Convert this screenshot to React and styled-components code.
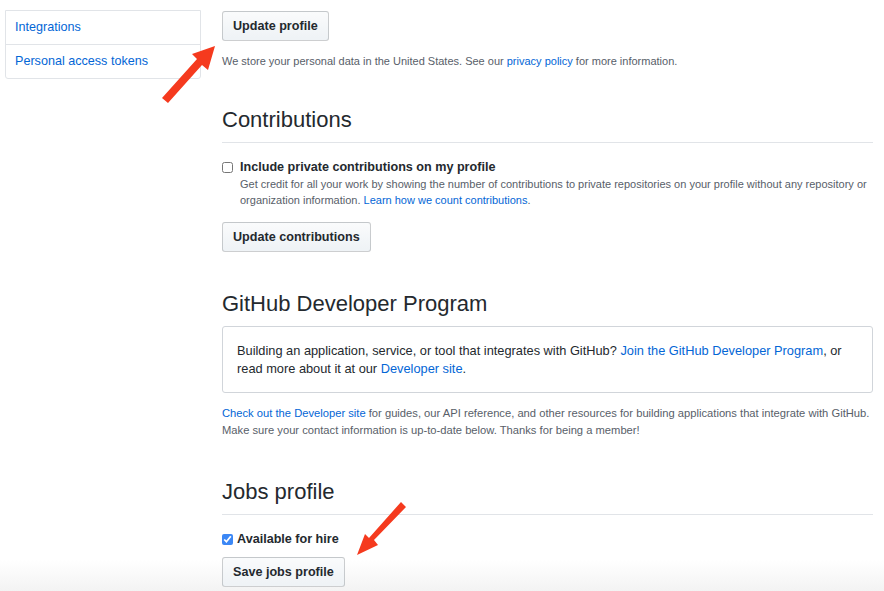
import React from 'react';
import styled, { createGlobalStyle } from 'styled-components';

const GlobalStyle = createGlobalStyle`
  html {
    min-height: 100%;
    background: linear-gradient(to bottom, #fff 0, #fff 560px, #f3f3f3 591px);
  }
  body {
    margin: 0;
    font-family: "Liberation Sans", Arial, Helvetica, sans-serif;
    color: #24292e;
    background: transparent;
  }
`;

const Page = styled.div`
  position: relative;
  display: flex;
  align-items: flex-start;
  gap: 21px;
  padding-left: 5px;
  width: 884px;
  height: 591px;
  overflow: hidden;
  box-sizing: border-box;
`;

const Sidebar = styled.nav`
  width: 196px;
  margin-top: 10px;
  border: 1px solid #e1e4e8;
  border-radius: 0 0 3px 3px;
  box-sizing: border-box;
`;

const SideItem = styled.a`
  display: block;
  height: 33px;
  line-height: 33px;
  padding-left: 9px;
  font-size: 12.6px;
  color: #0366d6;
  text-decoration: none;
  border-top: ${(p) => (p.first ? 'none' : '1px solid #e1e4e8')};
`;

const Main = styled.main`
  width: 651px;
  padding-top: 11px;
`;

const Button = styled.button`
  display: block;
  height: 30px;
  padding: 0 10px;
  margin-top: ${(p) => p.mt || 0}px;
  font-family: inherit;
  font-size: 12.6px;
  font-weight: bold;
  color: #24292e;
  background: linear-gradient(to bottom, #fafbfc, #eff3f6 90%);
  border: 1px solid rgba(27, 31, 35, 0.2);
  border-radius: 3px;
  cursor: pointer;
`;

const Note = styled.p`
  margin: ${(p) => p.mt || 0}px 0 0;
  font-size: ${(p) => p.fs || 11}px;
  line-height: ${(p) => p.lh || 16}px;
  color: #586069;
`;

const Link = styled.a`
  color: #0366d6;
  text-decoration: none;
`;

const Heading = styled.h2`
  margin: ${(p) => p.mt}px 0 0;
  padding-bottom: ${(p) => (p.divider ? 9 : 0)}px;
  font-size: 22px;
  font-weight: normal;
  line-height: 27px;
  color: #24292e;
  border-bottom: ${(p) => (p.divider ? '1px solid #e1e4e8' : 'none')};
`;

const CheckRow = styled.label`
  display: flex;
  align-items: center;
  gap: ${(p) => p.gap}px;
  margin-top: 15px;
  height: 18px;
  font-size: 12.6px;
  font-weight: bold;
  color: #24292e;
`;

const Check = styled.input`
  width: 11px;
  height: 11px;
  margin: 0;
  accent-color: #3b87f5;
`;

const Indented = styled.div`
  padding-left: 18px;
`;

const Box = styled.div`
  margin-top: 9px;
  padding: 15px 14px 14px;
  border: 1px solid #d1d5da;
  border-radius: 3px;
  font-size: 12.8px;
  line-height: 18px;
  color: #24292e;
`;

const Arrow = styled.svg`
  position: absolute;
  left: 0;
  top: 0;
  pointer-events: none;
`;

export default function App() {
  return (
    <>
      <GlobalStyle />
      <Page>
        <Sidebar>
          <SideItem href="#" first>
            Integrations
          </SideItem>
          <SideItem href="#">Personal access tokens</SideItem>
        </Sidebar>

        <Main>
          <Button>Update profile</Button>
          <Note mt={12}>
            We store your personal data in the United States. See our{' '}
            <Link href="#">privacy policy</Link> for more information.
          </Note>

          <Heading mt={37} divider>
            Contributions
          </Heading>
          <CheckRow gap={7}>
            <Check type="checkbox" />
            Include private contributions on my profile
          </CheckRow>
          <Indented>
            <Note>
              Get credit for all your work by showing the number of contributions to private
              repositories on your profile without any repository or organization information.{' '}
              <Link href="#">Learn how we count contributions</Link>.
            </Note>
          </Indented>
          <Button mt={14}>Update contributions</Button>

          <Heading mt={38}>GitHub Developer Program</Heading>
          <Box>
            Building an application, service, or tool that integrates with GitHub?{' '}
            <Link href="#">Join the GitHub Developer Program</Link>, or read more about it at our{' '}
            <Link href="#">Developer site</Link>.
          </Box>
          <Note mt={12} lh={17} fs={11.2}>
            <Link href="#">Check out the Developer site</Link> for guides, our API reference, and
            other resources for building applications that integrate with GitHub. Make sure your
            contact information is up-to-date below. Thanks for being a member!
          </Note>

          <Heading mt={39} divider>
            Jobs profile
          </Heading>
          <CheckRow gap={4}>
            <Check type="checkbox" defaultChecked />
            Available for hire
          </CheckRow>
          <Button mt={9}>Save jobs profile</Button>
        </Main>

        <Arrow width="884" height="591" viewBox="0 0 884 591">
          <g fill="#f53a1e">
            {/* arrow towards "Update profile" */}
            <polygon points="162,98 168,103 202,65 208,70 215,46 192,54 197,59" />
            {/* arrow towards "Save jobs profile" */}
            <polygon points="401,502 406,507 374,540 378,545 357,555 365,534 369,538" />
          </g>
        </Arrow>
      </Page>
    </>
  );
}
